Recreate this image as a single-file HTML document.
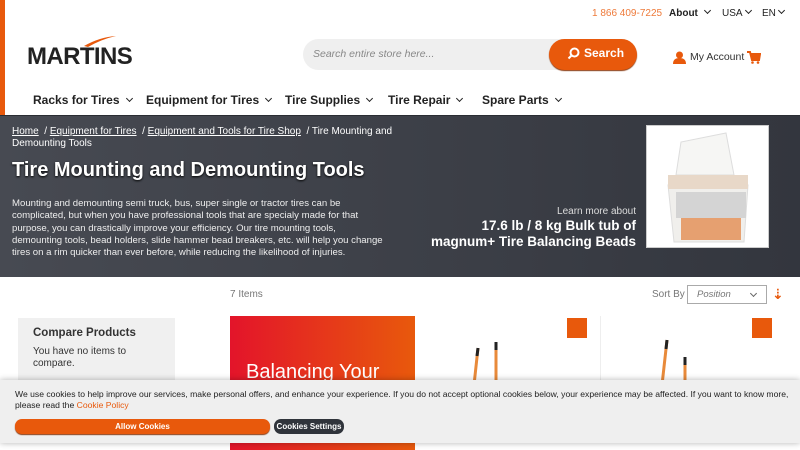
<!DOCTYPE html>
<html><head><meta charset="utf-8">
<style>
*{margin:0;padding:0;box-sizing:border-box}
body{width:800px;height:450px;overflow:hidden;position:relative;font-family:"Liberation Sans","DejaVu Sans",sans-serif;background:#fff;color:#222}
.a{position:absolute;white-space:nowrap}
.chev{display:inline-block;width:5px;height:5px;border-right:1.5px solid #222;border-bottom:1.5px solid #222;transform:rotate(45deg);margin-left:7px;position:relative;top:-3px}
.nav{font-weight:bold;font-size:12px;top:93px}
.hero{position:absolute;left:0;top:115px;width:800px;height:162px;background:linear-gradient(90deg,#474a52,#33363e);border-top:1px solid #2a2d33}
.w{color:#fff}
</style></head><body>
<div class="a" style="left:0;top:0;width:5px;height:115px;background:#e8590c"></div>
<div class="a" style="left:592px;top:8px;font-size:10px;color:#ee7a3a">1 866 409-7225</div>
<div class="a" style="left:669px;top:8px;font-size:10px;font-weight:bold">About<span class="chev"></span></div>
<div class="a" style="left:722px;top:8px;font-size:10px">USA<span class="chev" style="margin-left:3px"></span></div>
<div class="a" style="left:762px;top:8px;font-size:10px">EN<span class="chev" style="margin-left:3px"></span></div>
<svg class="a" style="left:82px;top:34px" width="36" height="14"><path d="M2 12 Q18 3 34 2 Q20 5 6 13Z" fill="#e8590c"/></svg>
<div class="a" style="left:27px;top:43px;font-size:24px;font-weight:bold;color:#222;letter-spacing:-0.6px">MARTINS</div>
<div class="a" style="left:303px;top:39px;width:334px;height:31px;border-radius:16px;background:#efefef"></div>
<div class="a" style="left:313px;top:48px;font-size:10.5px;font-style:italic;color:#888">Search entire store here...</div>
<div class="a" style="left:549px;top:39px;width:88px;height:31px;border-radius:16px;background:#e8590c;box-shadow:0 1px 1px #8a3a10"></div>
<svg class="a" style="left:567px;top:47px" width="13" height="13"><circle cx="7.5" cy="5.5" r="4" stroke="#fff" stroke-width="2" fill="none"/><path d="M4.5 8.5L1.5 11.5" stroke="#fff" stroke-width="2"/></svg>
<div class="a" style="left:584px;top:46px;font-size:12px;font-weight:bold;color:#fff">Search</div>
<svg class="a" style="left:673px;top:51px" width="13" height="13"><circle cx="6.5" cy="4" r="3.5" fill="#e8590c"/><path d="M0 13Q0 7 6.5 7Q13 7 13 13Z" fill="#e8590c"/></svg>
<div class="a" style="left:690px;top:51px;font-size:10.5px;color:#333">My Account</div>
<svg class="a" style="left:747px;top:51px" width="14" height="13"><path d="M0 1H3L5 9H12L13 3H4" stroke="#e8590c" stroke-width="2" fill="#e8590c"/><circle cx="5.5" cy="11.5" r="1.3" fill="#e8590c"/><circle cx="11" cy="11.5" r="1.3" fill="#e8590c"/></svg>
<div class="a nav" style="left:33px">Racks for Tires<span class="chev"></span></div>
<div class="a nav" style="left:146px">Equipment for Tires<span class="chev"></span></div>
<div class="a nav" style="left:285px">Tire Supplies<span class="chev"></span></div>
<div class="a nav" style="left:388px">Tire Repair<span class="chev"></span></div>
<div class="a nav" style="left:482px">Spare Parts<span class="chev"></span></div>
<div class="hero"></div>
<div class="a w" style="left:12px;top:126px;font-size:10px;line-height:12px"><u>Home</u> &nbsp;/ <u>Equipment for Tires</u> &nbsp;/ <u>Equipment and Tools for Tire Shop</u> &nbsp;/ Tire Mounting and<br>Demounting Tools</div>
<div class="a w" style="left:12px;top:159px;font-size:20px;font-weight:bold;text-shadow:0 1px 2px #000">Tire Mounting and Demounting Tools</div>
<div class="a w" style="left:12px;top:198px;font-size:9.6px;line-height:12.3px;color:#eee">Mounting and demounting semi truck, bus, super single or tractor tires can be<br>complicated, but when you have professional tools that are specialy made for that<br>purpose, you can drastically improve your efficiency. Our tire mounting tools,<br>demounting tools, bead holders, slide hammer bead breakers, etc. will help you change<br>tires on a rim quicker than ever before, while reducing the likelihood of injuries.</div>
<div class="a w" style="right:164px;top:206px;font-size:10px;color:#ddd">Learn more about</div>
<div class="a w" style="right:164px;top:218px;font-size:13.5px;font-weight:bold;line-height:16px;text-align:right">17.6 lb / 8 kg Bulk tub of<br>magnum+ Tire Balancing Beads</div>
<div class="a" style="left:646px;top:125px;width:123px;height:123px;background:#fff;border:1px solid #ccc"></div>
<svg class="a" style="left:656px;top:130px" width="105" height="115"><path d="M20 45L25 12L70 3L78 45Z" fill="#f6f6f4" stroke="#ddd"/><path d="M12 55H92L88 112H18Z" fill="#f0efec" stroke="#ddd"/><rect x="12" y="45" width="80" height="14" fill="#e8d8c8"/><rect x="25" y="88" width="60" height="22" fill="#e6a070"/><rect x="20" y="62" width="70" height="26" fill="#d4d4d4"/></svg>
<div class="a" style="left:230px;top:289px;font-size:10px;color:#777">7 Items</div>
<div class="a" style="left:652px;top:289px;font-size:10px;color:#777">Sort By</div>
<div class="a" style="left:687px;top:285px;width:80px;height:19px;border:1px solid #aaa"></div>
<div class="a" style="left:697px;top:289px;font-size:9.5px;font-style:italic;color:#777">Position</div>
<div class="a" style="left:751px;top:291px;width:5px;height:5px;border-right:1.5px solid #666;border-bottom:1.5px solid #666;transform:rotate(45deg)"></div>
<div class="a" style="left:772px;top:286px;font-size:14px;color:#e8590c;font-weight:bold">⇣</div>
<div class="a" style="left:18px;top:318px;width:157px;height:70px;background:#f0f0f0"></div>
<div class="a" style="left:33px;top:327px;font-size:11.5px;font-weight:bold;color:#333">Compare Products</div>
<div class="a" style="left:33px;top:346px;font-size:10px;line-height:11.5px;color:#333">You have no items to<br>compare.</div>
<div class="a" style="left:230px;top:316px;width:185px;height:134px;background:linear-gradient(90deg,#e3142a,#e8590c)"></div>
<div class="a w" style="left:246px;top:361px;font-size:20px">Balancing Your</div>
<div class="a" style="left:600px;top:316px;width:1px;height:80px;background:#eee"></div>
<div class="a" style="left:567px;top:318px;width:20px;height:20px;background:#e8590c"></div>
<div class="a" style="left:752px;top:318px;width:20px;height:20px;background:#e8590c"></div>
<svg class="a" style="left:460px;top:340px" width="60" height="45"><path d="M18 8L14 45M36 2V45" stroke="#e88a3a" stroke-width="3"/><path d="M18 8L17 16M36 2V10" stroke="#222" stroke-width="3"/></svg>
<svg class="a" style="left:645px;top:335px" width="60" height="50"><path d="M22 5L17 50M40 22V50" stroke="#e88a3a" stroke-width="3"/><path d="M22 5L21 14M40 22V30" stroke="#222" stroke-width="3"/></svg>
<div class="a" style="left:0;top:380px;width:800px;height:63px;background:#efefef;box-shadow:0 0 6px rgba(0,0,0,.3)"></div>
<div class="a" style="left:15px;top:389px;font-size:8.6px;line-height:11px;color:#222">We use cookies to help improve our services, make personal offers, and enhance your experience. If you do not accept optional cookies below, your experience may be affected. If you want to know more,<br>please read the <span style="color:#e8590c">Cookie Policy</span></div>
<div class="a" style="left:15px;top:419px;width:255px;height:15px;border-radius:7px;background:#e8590c;box-shadow:0 1px 1px #8a3a10;color:#fff;font-size:8px;font-weight:bold;text-align:center;line-height:15px">Allow Cookies</div>
<div class="a" style="left:274px;top:419px;width:70px;height:15px;border-radius:7px;background:#30343b;color:#fff;font-size:8px;font-weight:bold;text-align:center;line-height:15px">Cookies Settings</div>
</body></html>
